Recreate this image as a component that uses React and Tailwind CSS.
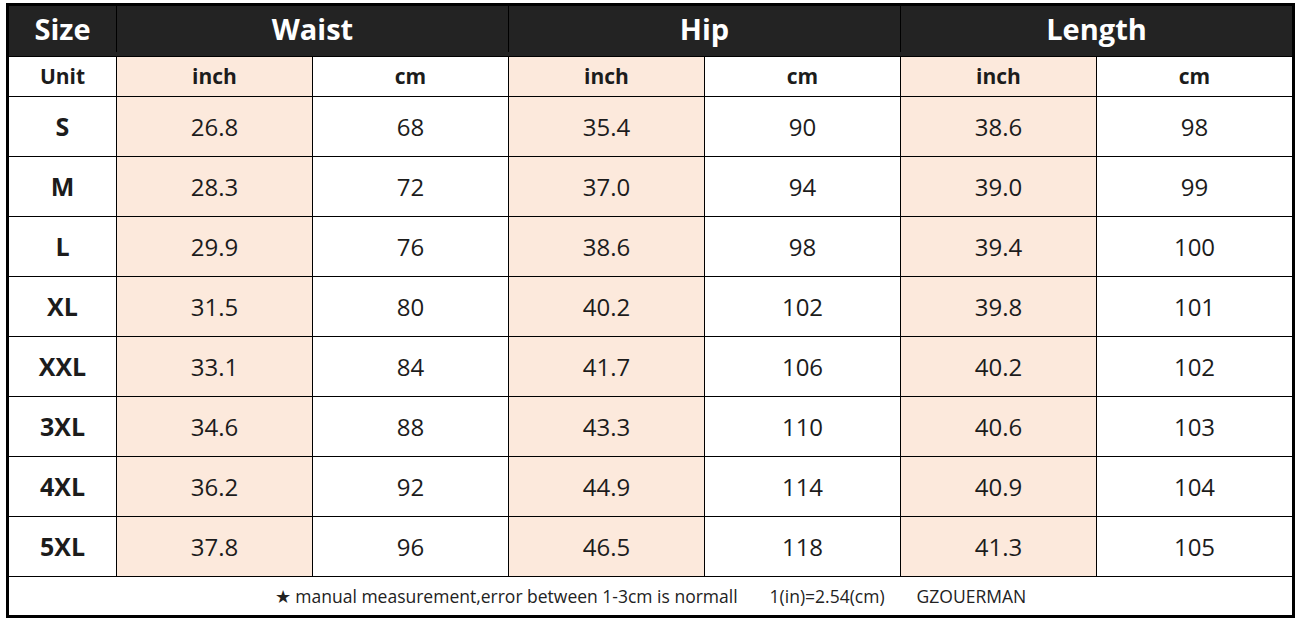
const rows = [
  ['S', '26.8', '68', '35.4', '90', '38.6', '98'],
  ['M', '28.3', '72', '37.0', '94', '39.0', '99'],
  ['L', '29.9', '76', '38.6', '98', '39.4', '100'],
  ['XL', '31.5', '80', '40.2', '102', '39.8', '101'],
  ['XXL', '33.1', '84', '41.7', '106', '40.2', '102'],
  ['3XL', '34.6', '88', '43.3', '110', '40.6', '103'],
  ['4XL', '36.2', '92', '44.9', '114', '40.9', '104'],
  ['5XL', '37.8', '96', '46.5', '118', '41.3', '105'],
]

const font = { fontFamily: '"Open Sans", "Noto Sans", sans-serif' }

function Row({ cells, bold, height, textSize, firstSize }) {
  return (
    <div className={`flex border-b border-black ${height}`}>
      {cells.map((c, i) => (
        <div
          key={i}
          className={`flex items-center justify-center ${i === 0 ? 'w-[108px]' : i === 6 ? 'w-[195px]' : 'w-[196px]'} ${
            i < 6 ? 'border-r border-black' : ''
          } ${i % 2 === 1 ? 'bg-[#fce9dc]' : 'bg-white'} ${
            i === 0 || bold ? 'font-bold' : ''
          } ${i === 0 ? firstSize : textSize}`}
        >
          {c}
        </div>
      ))}
    </div>
  )
}

export default function App() {
  return (
    <div className="w-[1296px] h-[619px] bg-white pt-[3px] pl-[6px] text-[#1c1c1c]" style={font}>
      <div className="w-[1289px] border-[3px] border-black">
        <div className="flex h-[51px] border-b border-black bg-[#232323] text-white font-bold text-[29px] pb-[4px]">
          <div className="w-[108px] border-r border-black flex items-center justify-center">Size</div>
          <div className="w-[392px] border-r border-black flex items-center justify-center">Waist</div>
          <div className="w-[392px] border-r border-black flex items-center justify-center">Hip</div>
          <div className="w-[391px] flex items-center justify-center">Length</div>
        </div>
        <Row
          cells={['Unit', 'inch', 'cm', 'inch', 'cm', 'inch', 'cm']}
          bold
          height="h-[40px]"
          textSize="text-[21px]"
          firstSize="text-[21px]"
        />
        {rows.map((r) => (
          <Row key={r[0]} cells={r} height="h-[60px]" textSize="text-[24px]" firstSize="text-[25px]" />
        ))}
        <div className="h-[38px] flex items-center justify-center gap-8 text-[17.5px] text-[#222]">
          <span>★ manual measurement,error between 1-3cm is normall</span>
          <span>1(in)=2.54(cm)</span>
          <span>GZOUERMAN</span>
        </div>
      </div>
    </div>
  )
}
